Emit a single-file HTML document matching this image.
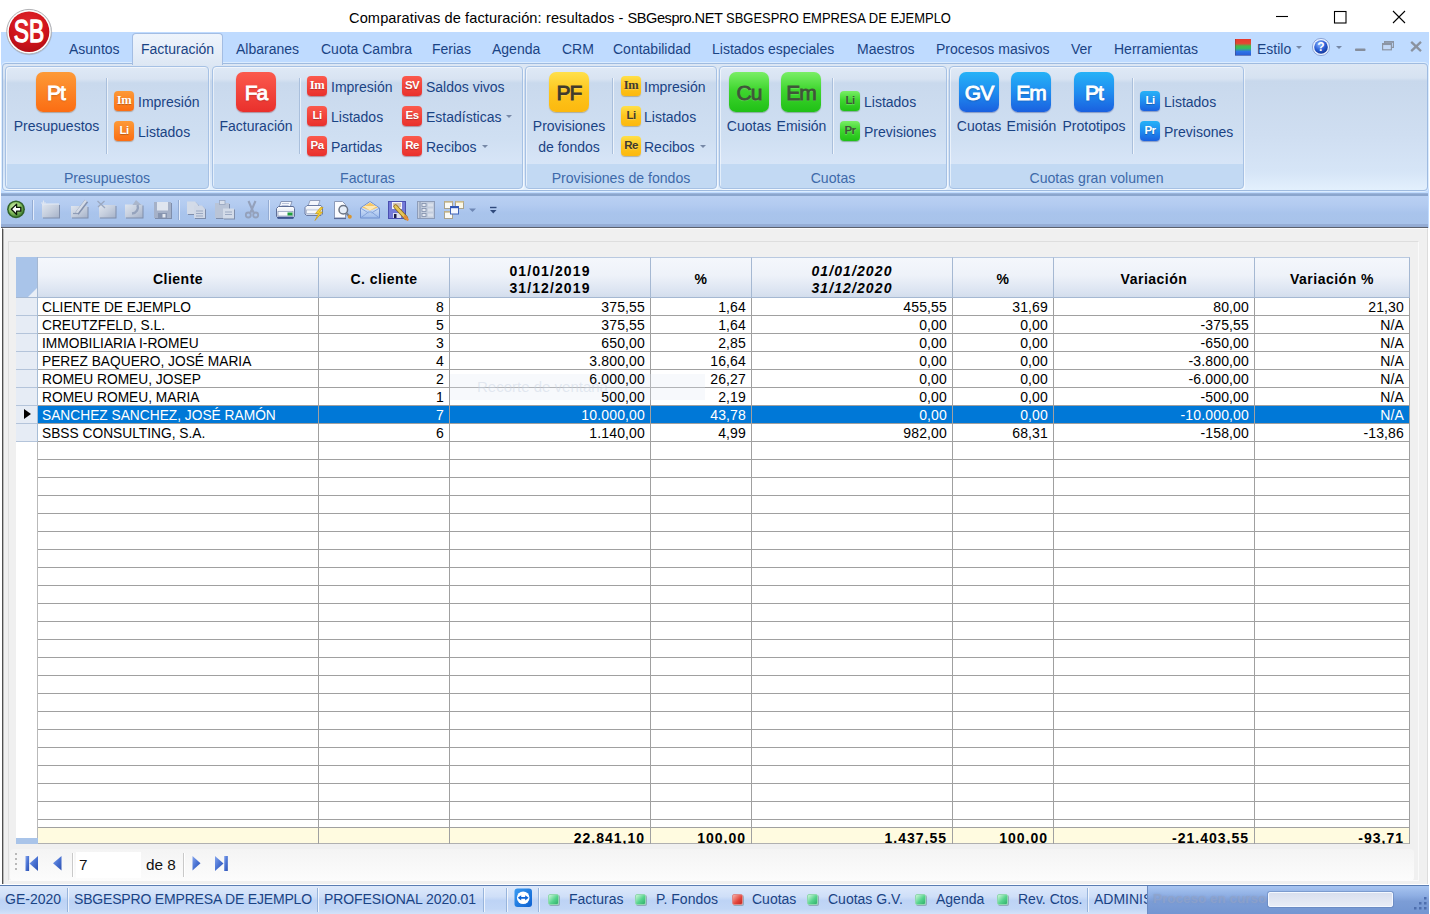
<!DOCTYPE html><html lang="es"><head><meta charset="utf-8"><title>Comparativas de facturación: resultados - SBGespro.NET</title><style>
*{box-sizing:border-box;margin:0;padding:0}
html,body{width:1430px;height:914px;overflow:hidden;background:#fff}
body{position:relative;font-family:"Liberation Sans",sans-serif;font-size:14px;color:#000}
.abs{position:absolute}
.t{position:absolute;white-space:nowrap;line-height:1}
/* title */
#title{left:349px;top:11px;font-size:14.6px;color:#000;letter-spacing:0}
#t1{letter-spacing:.105px}#t2{letter-spacing:-.485px}#t3{display:inline-block;transform:scaleX(.889);transform-origin:0 50%}
/* tab row */
#tabrow{left:1px;top:32px;width:1428px;height:196px;background:#bfdbff}
.tab{position:absolute;top:42px;font-size:14px;color:#1a4384;white-space:nowrap;line-height:1}
#acttab{left:132px;top:33px;width:91px;height:32px;border:1px solid #a3bde3;border-bottom:none;border-radius:4px 4px 0 0;background:linear-gradient(#eef4fc,#e5edf8 60%,#dde7f4)}
/* ribbon */
#ribbon{left:2px;top:63px;width:1426px;height:128px;border:1px solid #9fbbe0;border-radius:4px;box-shadow:0 0 0 1px rgba(226,240,255,.8);background:linear-gradient(#dde7f4 0,#d6e2f1 14px,#c8d8ec 17px,#cfdef1 70px,#d6e5f7 108px,#e3f0fd 126px)}
.grp{position:absolute;top:66px;height:123px;border:1px solid #a6c1e4;border-radius:4px;background:linear-gradient(#dfe9f6 0,#d8e3f2 12px,#c9d9ed 16px,#cfdff2 71px,#d7e5f7 97px,#c2d9f3 97px,#c2d9f3 100%);box-shadow:inset 1px 1px 0 rgba(255,255,255,.55), 1px 1px 0 rgba(255,255,255,.6)}
.gcap{position:absolute;left:0;right:0;bottom:0;height:23px;text-align:center;font-size:14.1px;line-height:27px;color:#3e6aaa;white-space:nowrap}
.big{position:absolute;top:72px;width:40px;height:40px;border-radius:7px;color:#fff;font-weight:normal;-webkit-text-stroke:.9px;font-size:21px;text-align:center;line-height:41px;letter-spacing:-1px;text-shadow:0 1px 2px rgba(0,0,0,.28)}
.sm{position:absolute;width:20px;height:20px;border-radius:4px;color:#fff;font-weight:bold;font-size:11.5px;text-align:center;line-height:19px;letter-spacing:-0.6px;margin-top:-1px;text-shadow:0 1px 1px rgba(0,0,0,.25)}
.sm{-webkit-text-stroke:0 !important}
.sf{font-family:"Liberation Serif",serif;font-size:12.5px !important;letter-spacing:-.3px !important}
.or{background:linear-gradient(#fd9a37,#fb6d13);box-shadow:0 1px 1px rgba(120,60,0,.35)}
.rd{background:linear-gradient(#fb5a4d,#e9302c);box-shadow:0 1px 1px rgba(120,0,0,.35)}
.ye{background:linear-gradient(#ffe04a,#fdc51c 50%,#fcb80e);box-shadow:0 1px 1px rgba(120,90,0,.35);color:#40392c !important;-webkit-text-stroke:.85px;text-shadow:0 1px 1px rgba(255,255,255,.25) !important}
.gr{background:linear-gradient(#7aee66,#3fd62f 45%,#20c016);box-shadow:0 1px 1px rgba(0,90,0,.35);color:#3f5539 !important;-webkit-text-stroke:.85px;text-shadow:0 1px 1px rgba(255,255,255,.25) !important}
.bl{background:linear-gradient(#25b2f7,#1f8df0 50%,#1a60df);box-shadow:0 1px 1px rgba(0,30,120,.35)}
.rl{position:absolute;font-size:14px;color:#1a4384;white-space:nowrap;line-height:1}
.rlc{position:absolute;font-size:14px;color:#1a4384;white-space:nowrap;line-height:1;text-align:center;transform:translateX(-50%)}
.vsep{position:absolute;top:78px;width:1px;height:76px;background:#a9bfdc;box-shadow:1px 0 0 rgba(255,255,255,.6)}
.dd{position:absolute;width:0;height:0;border:3px solid transparent;border-top:3px solid #7688a6;border-bottom:none}
/* toolbar */
#toolbar{left:1px;top:193px;width:1427px;height:35px;background:linear-gradient(#a9c1e4 0,#8ba6ce 1px,#8aa5cd 2.5px,#b9d0f3 3.5px,#b3cbf0 12px,#a9c4ec 20px,#a8c3ea 30.5px,#96aed6 31.5px,#93abd3 33.5px,#5b606c 34px,#5b606c 35px)}
/* panel */
#panel{left:2px;top:228px;width:1426px;height:656px;background:#f0f0f0;border-left:1px solid #505050;box-shadow:inset 1px 0 0 #b8b8b8;border-top:1px solid #fbfbfb;border-right:1px solid #dcdcdc}
#inner{left:8px;top:241px;width:1411px;height:640px;border:1px solid #dedede;border-right-color:#fafafa;border-bottom-color:#fafafa;background:#f0f0f0}
/* grid */
#grid{left:16px;top:257px;width:1394px;height:587px;background:#fff;overflow:hidden}
.hc{position:absolute;top:0;height:41px;border-right:1px solid #a5b8d2;border-bottom:1px solid #a5b8d2;border-top:1px solid #b9c9e0;background:linear-gradient(#f4f7fc 0,#eef2f9 45%,#d9e2f0 90%,#d3ddec 100%);font-weight:bold;font-size:14px;letter-spacing:.5px;padding-top:4px;display:flex;align-items:center;justify-content:center;text-align:center;line-height:17px}
.dt{letter-spacing:1.1px}
.vl{position:absolute;top:41px;width:1px;height:546px;background:#a0a0a0}
.hl{position:absolute;left:22px;width:1372px;height:1px;background:#a0a0a0}
.c{position:absolute;font-size:14px;line-height:17px;height:17px;white-space:nowrap;overflow:hidden}
.r{text-align:right;padding-right:5px;letter-spacing:.15px}
.l{padding-left:4px;font-size:13.75px}
.selrow{position:absolute;left:22px;width:1372px;height:18px;background:#0078d7}
.sel{color:#fff}
.ft{font-weight:bold;letter-spacing:1px}
/* status */
#status{left:0;top:885px;width:1429px;height:29px;background:linear-gradient(#dde9fb 0,#cfdff8 38%,#bdd3f5 52%,#c2d7f6 82%,#d3e2f9 100%);border-top:1px solid #5a7db3}
.st{position:absolute;top:892px;font-size:14px;color:#1a4384;white-space:nowrap;line-height:1}
.ssep{position:absolute;top:888px;width:1px;height:24px;background:#97b4dc;box-shadow:1px 0 0 rgba(255,255,255,.7)}
.led{position:absolute;top:894px;width:11px;height:11px;border-radius:2px;box-shadow:1px 1px 0 rgba(60,90,80,.35)}
.lg{background:linear-gradient(135deg,#cdf6da,#56d48e 55%,#32b06c);border:1px solid #8fd8ae}
.lr{background:linear-gradient(135deg,#f7b0a8,#e2433a 60%,#c02b25);border:1px solid #d88}
</style></head><body>
<div id="title" class="t"><span id="t1">Comparativas de facturación: resultados - </span><span id="t2">SBGespro.NET </span><span id="t3">SBGESPRO EMPRESA DE EJEMPLO</span></div>
<svg class="abs" style="left:1270px;top:5px" width="150" height="24" viewBox="0 0 150 24"><g stroke="#000" stroke-width="1.1" fill="none"><path d="M6 11.5H18"/><rect x="64.5" y="6.5" width="11.5" height="11.5"/><path d="M123 6L135 18M135 6L123 18"/></g></svg>
<div id="tabrow" class="abs"></div>
<div id="ribbon" class="abs"></div>
<div id="acttab" class="abs"></div>
<div class="tab" style="left:69px">Asuntos</div>
<div class="tab" style="left:141px">Facturación</div>
<div class="tab" style="left:236px">Albaranes</div>
<div class="tab" style="left:321px">Cuota Cambra</div>
<div class="tab" style="left:432px">Ferias</div>
<div class="tab" style="left:492px">Agenda</div>
<div class="tab" style="left:562px">CRM</div>
<div class="tab" style="left:613px">Contabilidad</div>
<div class="tab" style="left:712px">Listados especiales</div>
<div class="tab" style="left:857px">Maestros</div>
<div class="tab" style="left:936px">Procesos masivos</div>
<div class="tab" style="left:1071px">Ver</div>
<div class="tab" style="left:1114px">Herramientas</div>
<div class="abs" style="left:1235px;top:39px;width:16px;height:16px;background:linear-gradient(#e8382c 0,#e04a33 28%,#3fbf4a 45%,#35b86a 60%,#2f74e6 78%,#2a5fd8 100%);box-shadow:inset 1px 0 0 rgba(90,50,50,.35),0 1px 0 rgba(30,50,140,.55)"></div>
<div class="tab" style="left:1257px">Estilo</div>
<div class="dd" style="left:1296px;top:46px"></div>
<svg class="abs" style="left:1311px;top:37px" width="20" height="20" viewBox="0 0 20 20"><defs><radialGradient id="hg" cx="40%" cy="30%" r="70%"><stop offset="0" stop-color="#8fb6ff"/><stop offset=".6" stop-color="#2c5fd6"/><stop offset="1" stop-color="#173a9c"/></radialGradient></defs><circle cx="10" cy="10" r="8.6" fill="#e8f0ff" stroke="#8ea6d8" stroke-width="1"/><circle cx="10" cy="10" r="6.8" fill="url(#hg)"/><text x="10" y="14.3" font-family="Liberation Sans,sans-serif" font-weight="bold" font-size="12" fill="#fff" text-anchor="middle">?</text></svg>
<div class="dd" style="left:1336px;top:46px"></div>
<svg class="abs" style="left:1350px;top:38px" width="76" height="16" viewBox="0 0 76 16"><rect x="5" y="10.600" width="10.500" height="2.400" rx=".8" fill="#868e9c"/><g fill="none" stroke="#8c95a4" stroke-width="1.200"><path d="M34.600 5.500v-1.900h8.800v5.800h-1.900"/><path d="M34.600 3.900h8.800" stroke-width="1.800"/><rect x="32.600" y="5.600" width="8.800" height="6.200" fill="#c3d9f8"/><path d="M32.600 6.100h8.800" stroke-width="1.900"/></g><path d="M61.200 3.800l9.800 9.400M71 3.800l-9.800 9.400" stroke="#8a929f" stroke-width="2.300" fill="none"/></svg>
<svg class="abs" style="left:4px;top:7px" width="52" height="52" viewBox="0 0 52 52"><defs><radialGradient id="sbg" cx="50%" cy="30%" r="80%"><stop offset="0" stop-color="#e0282e"/><stop offset=".55" stop-color="#d0141b"/><stop offset="1" stop-color="#a90c12"/></radialGradient></defs><circle cx="25.300" cy="25.300" r="22.900" fill="rgba(130,140,160,.30)"/><circle cx="25.050" cy="24.700" r="22.300" fill="#fdfdfd" stroke="#a9a9ad" stroke-width=".9"/><circle cx="25.050" cy="24.700" r="20.300" fill="url(#sbg)"/><text x="24.900" y="34.600" font-family="Liberation Sans,sans-serif" font-weight="normal" font-size="30.5" fill="#fff" stroke="#fff" stroke-width="1.300" stroke-linejoin="round" text-anchor="middle" textLength="30.300" lengthAdjust="spacingAndGlyphs">SB</text></svg>
<div class="grp" style="left:5px;width:204px"><div class="gcap">Presupuestos</div></div>
<div class="grp" style="left:212px;width:311px"><div class="gcap">Facturas</div></div>
<div class="grp" style="left:525px;width:192px"><div class="gcap">Provisiones de fondos</div></div>
<div class="grp" style="left:719px;width:228px"><div class="gcap">Cuotas</div></div>
<div class="grp" style="left:949px;width:295px"><div class="gcap">Cuotas gran volumen</div></div>
<div class="big or" style="left:36px">Pt</div>
<div class="rlc" style="left:56.5px;top:119px">Presupuestos</div>
<div class="vsep" style="left:106px"></div>
<div class="sm or sf" style="left:114px;top:92px">Im</div>
<div class="rl" style="left:138px;top:95px">Impresión</div>
<div class="sm or" style="left:114px;top:122px">Li</div>
<div class="rl" style="left:138px;top:125px">Listados</div>
<div class="big rd" style="left:236px">Fa</div>
<div class="rlc" style="left:256px;top:119px">Facturación</div>
<div class="vsep" style="left:299px"></div>
<div class="sm rd sf" style="left:307px;top:77px">Im</div>
<div class="rl" style="left:331px;top:80px">Impresión</div>
<div class="sm rd" style="left:307px;top:107px">Li</div>
<div class="rl" style="left:331px;top:110px">Listados</div>
<div class="sm rd" style="left:307px;top:137px">Pa</div>
<div class="rl" style="left:331px;top:140px">Partidas</div>
<div class="sm rd" style="left:402px;top:77px">SV</div>
<div class="rl" style="left:426px;top:80px">Saldos vivos</div>
<div class="sm rd" style="left:402px;top:107px">Es</div>
<div class="rl" style="left:426px;top:110px">Estadísticas</div>
<div class="sm rd" style="left:402px;top:137px">Re</div>
<div class="rl" style="left:426px;top:140px">Recibos</div>
<div class="dd" style="left:506px;top:115px"></div>
<div class="dd" style="left:482px;top:145px"></div>
<div class="big ye" style="left:549px">PF</div>
<div class="rlc" style="left:569px;top:119px">Provisiones</div>
<div class="rlc" style="left:569px;top:140px">de fondos</div>
<div class="vsep" style="left:612px"></div>
<div class="sm ye sf" style="left:621px;top:77px">Im</div>
<div class="rl" style="left:644px;top:80px">Impresión</div>
<div class="sm ye" style="left:621px;top:107px">Li</div>
<div class="rl" style="left:644px;top:110px">Listados</div>
<div class="sm ye" style="left:621px;top:137px">Re</div>
<div class="rl" style="left:644px;top:140px">Recibos</div>
<div class="dd" style="left:700px;top:145px"></div>
<div class="big gr" style="left:729px">Cu</div>
<div class="rlc" style="left:749px;top:119px">Cuotas</div>
<div class="big gr" style="left:781px">Em</div>
<div class="rlc" style="left:801.5px;top:119px">Emisión</div>
<div class="vsep" style="left:832px"></div>
<div class="sm gr" style="left:840px;top:92px">Li</div>
<div class="rl" style="left:864px;top:95px">Listados</div>
<div class="sm gr" style="left:840px;top:122px">Pr</div>
<div class="rl" style="left:864px;top:125px">Previsiones</div>
<div class="big bl" style="left:959px">GV</div>
<div class="rlc" style="left:979px;top:119px">Cuotas</div>
<div class="big bl" style="left:1011px">Em</div>
<div class="rlc" style="left:1031.5px;top:119px">Emisión</div>
<div class="big bl" style="left:1074px">Pt</div>
<div class="rlc" style="left:1094px;top:119px">Prototipos</div>
<div class="vsep" style="left:1132px"></div>
<div class="sm bl" style="left:1140px;top:92px">Li</div>
<div class="rl" style="left:1164px;top:95px">Listados</div>
<div class="sm bl" style="left:1140px;top:122px">Pr</div>
<div class="rl" style="left:1164px;top:125px">Previsones</div>
<div id="toolbar" class="abs"></div>
<svg class="abs" style="left:0;top:195px" width="520" height="32" viewBox="0 195 520 32">
<defs>
<radialGradient id="bkg" cx="40%" cy="35%" r="70%"><stop offset="0" stop-color="#d6efb4"/><stop offset=".55" stop-color="#8cc565"/><stop offset="1" stop-color="#3c7a30"/></radialGradient>
<linearGradient id="dg" x1="0" y1="0" x2="1" y2="1"><stop offset="0" stop-color="#dfe5ee"/><stop offset=".5" stop-color="#c6cfde"/><stop offset="1" stop-color="#a7b3c9"/></linearGradient>
<linearGradient id="env" x1="0" y1="0" x2="0" y2="1"><stop offset="0" stop-color="#f4f8ff"/><stop offset="1" stop-color="#9dbcec"/></linearGradient>
<linearGradient id="pr1" x1="0" y1="0" x2="0" y2="1"><stop offset="0" stop-color="#ffffff"/><stop offset="1" stop-color="#c9d3e6"/></linearGradient>
</defs>
<!-- back -->
<circle cx="16" cy="209.300" r="8.900" fill="#2f6228"/><circle cx="16" cy="209.300" r="7.400" fill="url(#bkg)"/>
<path d="M11.300 209.300l5.300-5.200v3.300h4.200v3.800h-4.200v3.300z" fill="#fff" stroke="#0c1a09" stroke-width="1.300" stroke-linejoin="round"/>
<!-- separators -->
<g><rect x="32" y="200" width="1" height="20" fill="#93abd2"/><rect x="33" y="200" width="1" height="20" fill="#e3ecfb"/>
<rect x="178" y="200" width="1" height="20" fill="#93abd2"/><rect x="179" y="200" width="1" height="20" fill="#e3ecfb"/>
<rect x="268" y="200" width="1" height="20" fill="#93abd2"/><rect x="269" y="200" width="1" height="20" fill="#e3ecfb"/></g>
<!-- disabled icons -->
<g>
 <!-- new -->
 <rect x="43" y="205" width="17" height="13.500" fill="#7f8eab"/><rect x="42" y="204" width="17" height="13.500" fill="url(#dg)"/><path d="M42 204h17" stroke="#e6ecf5" stroke-width="1"/><path d="M43.500 200.500v5M41 203h5" stroke="#dfe6f1" stroke-width="1.200"/>
 <!-- edit -->
 <rect x="72" y="207" width="16.500" height="11.500" fill="#7f8eab"/><rect x="71" y="206" width="16.500" height="11.500" fill="url(#dg)"/><path d="M77 213.500l9.500-12.500" stroke="#8492ae" stroke-width="4.200"/><path d="M76.500 213l9.500-12.500" stroke="#d5dce8" stroke-width="2.400"/><path d="M73 213.500h5" stroke="#8f9db8" stroke-width="1.200"/>
 <!-- delete -->
 <rect x="100" y="206" width="16.500" height="12.500" fill="#7f8eab"/><rect x="99" y="205" width="16.500" height="12.500" fill="url(#dg)"/><path d="M97.500 201l7.500 7M104.500 201l-6.500 6" stroke="#9aa8c1" stroke-width="1.300"/>
 <!-- undo -->
 <rect x="126" y="205.500" width="17.500" height="13" fill="#7f8eab"/><rect x="125" y="204.500" width="17.500" height="13" fill="url(#dg)"/><path d="M136 200l5.500 5h-9z" fill="#aab6cb"/><path d="M137.500 205c1.500 4-1 8-5.500 8.500" stroke="#95a3bd" stroke-width="2.400" fill="none"/>
 <!-- save -->
 <rect x="155" y="203" width="17" height="16" fill="#7f8eab"/><rect x="154" y="202" width="17" height="16" fill="#a5b1c8"/><rect x="157" y="202" width="11" height="8.500" fill="#dfe5ef"/><rect x="158" y="213" width="9" height="5" fill="#8795b0"/><rect x="162.500" y="214" width="3" height="3.500" fill="#e3e8f0"/>
 <!-- copy -->
 <path d="M187 201.500h8l3 3v9.500h-11z" fill="#7f8eab" transform="translate(1,1)"/><path d="M187 201.500h8l3 3v9.500h-11z" fill="#d3dbe8"/><path d="M194 205.500h8l3 3v9.500h-11z" fill="#7f8eab" transform="translate(1,1)"/><path d="M194 205.500h8l3 3v9.500h-11z" fill="#d0d8e6"/><path d="M196 211h7M196 213.500h7M196 216h7" stroke="#9ba9c2" stroke-width="1"/>
 <!-- paste -->
 <rect x="216" y="204" width="14" height="15" fill="#7f8eab"/><rect x="215" y="203" width="14" height="15" fill="#b9c4d7"/><rect x="219.500" y="200.500" width="5.500" height="4" fill="#d8dfeb" stroke="#97a5bf" stroke-width=".8"/><rect x="224" y="209.500" width="11" height="10" fill="#7f8eab"/><rect x="223" y="208.500" width="11" height="10" fill="#d3dbe8"/><path d="M225 212h7M225 214.500h7" stroke="#9ba9c2" stroke-width="1"/>
 <!-- cut -->
 <path d="M248.500 201l5 11.500M255.500 201l-5 11.500" stroke="#94a1bb" stroke-width="2.100"/><circle cx="248.300" cy="215" r="2.500" fill="none" stroke="#94a1bb" stroke-width="1.800"/><circle cx="255.700" cy="215" r="2.500" fill="none" stroke="#94a1bb" stroke-width="1.800"/>
</g>
<!-- printer -->
<g>
 <path d="M281 201.500h11l-2 6h-11z" fill="#f3f6fc" stroke="#7f8fb0" stroke-width=".9"/><path d="M282 203.500h7M281.500 205.500h7" stroke="#aab6d0" stroke-width=".8"/>
 <path d="M276.500 208.500l2-2h15l1 2v8l-1.500 1.500h-15l-1.500-1.500z" fill="url(#pr1)" stroke="#5e6f98" stroke-width="1"/>
 <rect x="278" y="211.500" width="15" height="4.500" fill="#f8fafd" stroke="#8c9ab8" stroke-width=".7"/><rect x="287.500" y="212.500" width="5" height="3" fill="#1f9e3c"/>
 <path d="M277.500 217.800h16" stroke="#3d5590" stroke-width="2"/>
</g>
<!-- quick print -->
<g>
 <path d="M310 200.500h10l-2 5.500h-10z" fill="#f3f6fc" stroke="#8c9ab8" stroke-width=".9"/>
 <path d="M305 207.500l2-2h14l1.500 2v6.500l-1.500 1.500h-14.500l-1.500-1.500z" fill="url(#pr1)" stroke="#6a7ba3" stroke-width="1"/>
 <rect x="306.500" y="210" width="12" height="3.500" fill="#f8fafd" stroke="#9aa7c2" stroke-width=".6"/>
 <path d="M320.500 207.500l-5 6h3l-3.500 7 7.500-8.500h-3l3.500-4.500z" fill="#f6d235" stroke="#c79a18" stroke-width=".7"/>
</g>
<!-- preview -->
<g>
 <path d="M334.500 201.500h8l3 3v13.500h-11z" fill="#fbfcff" stroke="#8c9ab8" stroke-width="1"/><path d="M334 218.500h12" stroke="#5a6c98" stroke-width="1.200"/>
 <circle cx="343.300" cy="209.800" r="4.300" fill="#e6eef9" stroke="#6b7484" stroke-width="1.500"/>
 <path d="M346.500 213.200l2.500 2.800" stroke="#7a8290" stroke-width="2.200"/><circle cx="349.800" cy="216.800" r="2" fill="#d9952f"/>
</g>
<!-- envelope -->
<g>
 <path d="M360.500 208l9.500-6.500 9.500 6.500v10h-19z" fill="url(#env)" stroke="#6f8fce" stroke-width="1"/>
 <path d="M362 207.500l8-5 8 5-8 3z" fill="#f7c765"/><path d="M363 206h14l-7 4.500z" fill="#fde9b8"/>
 <path d="M360.500 218l8-6h3l8 6M360.500 208l8 5M379.500 208l-8 5" stroke="#7f9fd8" stroke-width=".9" fill="none"/>
</g>
<!-- save as (floppy + pencil) -->
<g>
 <rect x="388.500" y="201.500" width="17" height="17" fill="#747ad8" stroke="#4a4fb0" stroke-width="1"/>
 <rect x="392" y="202" width="10" height="7" fill="#f4f5fb"/><path d="M393 204h8M393 206h8" stroke="#9a6a3a" stroke-width=".7"/>
 <rect x="393" y="213" width="8" height="5" fill="#dcdff2"/><rect x="394" y="214" width="2.500" height="4" fill="#1d1f4a"/>
 <path d="M395.500 206.500l10.500 11.500" stroke="#8a6a1c" stroke-width="4.200" stroke-linecap="round"/><path d="M395.500 206.500l10.500 11.500" stroke="#e5c558" stroke-width="2.600" stroke-linecap="round"/><path d="M405 216.500l2.500 3" stroke="#e58a3a" stroke-width="2.600" stroke-linecap="round"/>
</g>
<!-- list (disabled) -->
<g>
 <rect x="417.500" y="201.500" width="17" height="17" fill="#c3cddd" stroke="#8d9cb8" stroke-width="1"/>
 <path d="M420 201.500v17" stroke="#8d9cb8" stroke-width="1.200"/>
 <rect x="422" y="203.500" width="4" height="3" fill="#e3e8f1" stroke="#7f8eab" stroke-width=".8"/><rect x="422" y="208.500" width="4" height="3" fill="#e3e8f1" stroke="#7f8eab" stroke-width=".8"/><rect x="422" y="213.500" width="4" height="3" fill="#e3e8f1" stroke="#7f8eab" stroke-width=".8"/>
 <rect x="428" y="203.500" width="5" height="3" fill="#d9e0eb"/><rect x="428" y="208.500" width="5" height="3" fill="#d9e0eb"/><rect x="428" y="213.500" width="5" height="3" fill="#d9e0eb"/>
</g>
<!-- windows -->
<g>
 <rect x="444.500" y="201.500" width="8" height="7" fill="#fbfbf6" stroke="#a9a28c" stroke-width="1"/><path d="M444.500 202h8" stroke="#c9b98c" stroke-width="1.400"/>
 <rect x="455.500" y="201.500" width="8" height="7" fill="#fbf8e8" stroke="#a9a28c" stroke-width="1"/><path d="M455.500 202h8" stroke="#d6c48e" stroke-width="1.400"/>
 <rect x="444.500" y="211.500" width="8" height="7" fill="#fbfbf6" stroke="#a9a28c" stroke-width="1"/><path d="M444.500 212h8" stroke="#c9b98c" stroke-width="1.400"/>
 <rect x="450.500" y="206.500" width="8" height="7.500" fill="#f4f8ff" stroke="#3f63b8" stroke-width="1"/><path d="M450.500 207.300h8" stroke="#2f55b5" stroke-width="1.800"/>
</g>
<path d="M469 208.500h7l-3.500 3.500z" fill="#6f88b5"/>
<path d="M490 207.500h6.500" stroke="#2f4a7c" stroke-width="1.400"/><path d="M490 210h6.500l-3.250 3.500z" fill="#2f4a7c"/>
</svg>

<div id="panel" class="abs"></div><div id="inner" class="abs"></div>
<div id="grid" class="abs">
<div class="abs" style="left:0;top:0;width:22px;height:41px;background:#a9c4e9;border-right:1px solid #a5b8d2;border-bottom:1px solid #a5b8d2"><div class="abs" style="right:0;bottom:0;width:0;height:0;border-left:9px solid transparent;border-bottom:9px solid #e9eef6"></div></div>
<div class="hc" style="left:22px;width:281px"><span>Cliente</span></div>
<div class="hc" style="left:303px;width:131px"><span>C. cliente</span></div>
<div class="hc" style="left:434px;width:201px"><span><span class="dt">01/01/2019<br>31/12/2019</span></span></div>
<div class="hc" style="left:635px;width:101px"><span>%</span></div>
<div class="hc" style="left:736px;width:201px"><span><i class="dt">01/01/2020<br>31/12/2020</i></span></div>
<div class="hc" style="left:937px;width:101px"><span>%</span></div>
<div class="hc" style="left:1038px;width:201px"><span>Variación</span></div>
<div class="hc" style="left:1239px;width:155px"><span>Variación %</span></div>
<div class="abs" style="left:0;top:41px;width:22px;height:144px;background:#e6ecf5;border-right:1px solid #a5b8d2"></div>
<div class="abs" style="left:0;top:58px;width:22px;height:1px;background:#b4c4da"></div>
<div class="abs" style="left:0;top:76px;width:22px;height:1px;background:#b4c4da"></div>
<div class="abs" style="left:0;top:94px;width:22px;height:1px;background:#b4c4da"></div>
<div class="abs" style="left:0;top:112px;width:22px;height:1px;background:#b4c4da"></div>
<div class="abs" style="left:0;top:130px;width:22px;height:1px;background:#b4c4da"></div>
<div class="abs" style="left:0;top:148px;width:22px;height:1px;background:#b4c4da"></div>
<div class="abs" style="left:0;top:166px;width:22px;height:1px;background:#b4c4da"></div>
<div class="abs" style="left:0;top:184px;width:22px;height:1px;background:#b4c4da"></div>
<div class="selrow" style="top:149px"></div>
<div class="hl" style="top:58px"></div>
<div class="hl" style="top:76px"></div>
<div class="hl" style="top:94px"></div>
<div class="hl" style="top:112px"></div>
<div class="hl" style="top:130px"></div>
<div class="hl" style="top:148px"></div>
<div class="hl" style="top:166px"></div>
<div class="hl" style="top:184px"></div>
<div class="hl" style="top:202px"></div>
<div class="hl" style="top:220px"></div>
<div class="hl" style="top:238px"></div>
<div class="hl" style="top:256px"></div>
<div class="hl" style="top:274px"></div>
<div class="hl" style="top:292px"></div>
<div class="hl" style="top:310px"></div>
<div class="hl" style="top:328px"></div>
<div class="hl" style="top:346px"></div>
<div class="hl" style="top:364px"></div>
<div class="hl" style="top:382px"></div>
<div class="hl" style="top:400px"></div>
<div class="hl" style="top:418px"></div>
<div class="hl" style="top:436px"></div>
<div class="hl" style="top:454px"></div>
<div class="hl" style="top:472px"></div>
<div class="hl" style="top:490px"></div>
<div class="hl" style="top:508px"></div>
<div class="hl" style="top:526px"></div>
<div class="hl" style="top:544px"></div>
<div class="hl" style="top:562px"></div>
<div class="abs" style="left:22px;top:570px;width:1372px;height:17px;background:#fffbe0;border-top:1px solid #a0a0a0;border-bottom:1px solid #b0b0b0"></div>
<div class="abs" style="left:0;top:581px;width:22px;height:6px;background:#a9c4e9"></div>
<div class="vl" style="left:302px"></div>
<div class="vl" style="left:433px"></div>
<div class="vl" style="left:634px"></div>
<div class="vl" style="left:735px"></div>
<div class="vl" style="left:936px"></div>
<div class="vl" style="left:1037px"></div>
<div class="vl" style="left:1238px"></div>
<div class="vl" style="left:1393px"></div>
<div class="vl" style="left:21px;background:#a7bdd6;height:144px"></div><div class="vl" style="left:21px;top:185px;height:396px;background:#b9b9b9"></div>
<div class="abs" style="left:434px;top:117px;width:255px;height:26px;background:rgba(228,235,246,.28)"></div><div class="t" style="left:461px;top:122px;font-size:15px;color:rgba(200,210,225,.45)">Recorte de ventana</div>
<div class="c l" style="left:22px;top:42px;width:280px">CLIENTE DE EJEMPLO</div>
<div class="c r" style="left:303px;top:42px;width:130px">8</div>
<div class="c r" style="left:434px;top:42px;width:200px">375,55</div>
<div class="c r" style="left:635px;top:42px;width:100px">1,64</div>
<div class="c r" style="left:736px;top:42px;width:200px">455,55</div>
<div class="c r" style="left:937px;top:42px;width:100px">31,69</div>
<div class="c r" style="left:1038px;top:42px;width:200px">80,00</div>
<div class="c r" style="left:1239px;top:42px;width:154px">21,30</div>
<div class="c l" style="left:22px;top:60px;width:280px">CREUTZFELD, S.L.</div>
<div class="c r" style="left:303px;top:60px;width:130px">5</div>
<div class="c r" style="left:434px;top:60px;width:200px">375,55</div>
<div class="c r" style="left:635px;top:60px;width:100px">1,64</div>
<div class="c r" style="left:736px;top:60px;width:200px">0,00</div>
<div class="c r" style="left:937px;top:60px;width:100px">0,00</div>
<div class="c r" style="left:1038px;top:60px;width:200px">-375,55</div>
<div class="c r" style="left:1239px;top:60px;width:154px">N/A</div>
<div class="c l" style="left:22px;top:78px;width:280px">IMMOBILIARIA I-ROMEU</div>
<div class="c r" style="left:303px;top:78px;width:130px">3</div>
<div class="c r" style="left:434px;top:78px;width:200px">650,00</div>
<div class="c r" style="left:635px;top:78px;width:100px">2,85</div>
<div class="c r" style="left:736px;top:78px;width:200px">0,00</div>
<div class="c r" style="left:937px;top:78px;width:100px">0,00</div>
<div class="c r" style="left:1038px;top:78px;width:200px">-650,00</div>
<div class="c r" style="left:1239px;top:78px;width:154px">N/A</div>
<div class="c l" style="left:22px;top:96px;width:280px">PEREZ BAQUERO, JOSÉ MARIA</div>
<div class="c r" style="left:303px;top:96px;width:130px">4</div>
<div class="c r" style="left:434px;top:96px;width:200px">3.800,00</div>
<div class="c r" style="left:635px;top:96px;width:100px">16,64</div>
<div class="c r" style="left:736px;top:96px;width:200px">0,00</div>
<div class="c r" style="left:937px;top:96px;width:100px">0,00</div>
<div class="c r" style="left:1038px;top:96px;width:200px">-3.800,00</div>
<div class="c r" style="left:1239px;top:96px;width:154px">N/A</div>
<div class="c l" style="left:22px;top:114px;width:280px">ROMEU ROMEU, JOSEP</div>
<div class="c r" style="left:303px;top:114px;width:130px">2</div>
<div class="c r" style="left:434px;top:114px;width:200px">6.000,00</div>
<div class="c r" style="left:635px;top:114px;width:100px">26,27</div>
<div class="c r" style="left:736px;top:114px;width:200px">0,00</div>
<div class="c r" style="left:937px;top:114px;width:100px">0,00</div>
<div class="c r" style="left:1038px;top:114px;width:200px">-6.000,00</div>
<div class="c r" style="left:1239px;top:114px;width:154px">N/A</div>
<div class="c l" style="left:22px;top:132px;width:280px">ROMEU ROMEU, MARIA</div>
<div class="c r" style="left:303px;top:132px;width:130px">1</div>
<div class="c r" style="left:434px;top:132px;width:200px">500,00</div>
<div class="c r" style="left:635px;top:132px;width:100px">2,19</div>
<div class="c r" style="left:736px;top:132px;width:200px">0,00</div>
<div class="c r" style="left:937px;top:132px;width:100px">0,00</div>
<div class="c r" style="left:1038px;top:132px;width:200px">-500,00</div>
<div class="c r" style="left:1239px;top:132px;width:154px">N/A</div>
<div class="c l sel" style="left:22px;top:150px;width:280px">SANCHEZ SANCHEZ, JOSÉ RAMÓN</div>
<div class="c r sel" style="left:303px;top:150px;width:130px">7</div>
<div class="c r sel" style="left:434px;top:150px;width:200px">10.000,00</div>
<div class="c r sel" style="left:635px;top:150px;width:100px">43,78</div>
<div class="c r sel" style="left:736px;top:150px;width:200px">0,00</div>
<div class="c r sel" style="left:937px;top:150px;width:100px">0,00</div>
<div class="c r sel" style="left:1038px;top:150px;width:200px">-10.000,00</div>
<div class="c r sel" style="left:1239px;top:150px;width:154px">N/A</div>
<div class="c l" style="left:22px;top:168px;width:280px">SBSS CONSULTING, S.A.</div>
<div class="c r" style="left:303px;top:168px;width:130px">6</div>
<div class="c r" style="left:434px;top:168px;width:200px">1.140,00</div>
<div class="c r" style="left:635px;top:168px;width:100px">4,99</div>
<div class="c r" style="left:736px;top:168px;width:200px">982,00</div>
<div class="c r" style="left:937px;top:168px;width:100px">68,31</div>
<div class="c r" style="left:1038px;top:168px;width:200px">-158,00</div>
<div class="c r" style="left:1239px;top:168px;width:154px">-13,86</div>
<div class="c r ft" style="left:434px;top:573px;height:14px;width:200px">22.841,10</div>
<div class="c r ft" style="left:635px;top:573px;height:14px;width:100px">100,00</div>
<div class="c r ft" style="left:736px;top:573px;height:14px;width:200px">1.437,55</div>
<div class="c r ft" style="left:937px;top:573px;height:14px;width:100px">100,00</div>
<div class="c r ft" style="left:1038px;top:573px;height:14px;width:200px">-21.403,55</div>
<div class="c r ft" style="left:1239px;top:573px;height:14px;width:154px">-93,71</div>
<div class="abs" style="left:8px;top:152px;width:0;height:0;border:5.5px solid transparent;border-left:7px solid #000;border-right:none"></div>
</div>
<div class="abs" style="left:10px;top:849px;width:1404px;height:32px;background:linear-gradient(#f4f4f4,#fcfcfc);border-radius:4px"></div>
<svg class="abs" style="left:10px;top:848px" width="230" height="34" viewBox="10 848 230 34">
<defs><linearGradient id="nb" x1="0" y1="0" x2="1" y2="1"><stop offset="0" stop-color="#86a6ee"/><stop offset=".5" stop-color="#4a73d3"/><stop offset="1" stop-color="#2c4fb0"/></linearGradient></defs>
<g fill="#b9b9b9"><rect x="15" y="853" width="2" height="2"/><rect x="15" y="858" width="2" height="2"/><rect x="15" y="863" width="2" height="2"/><rect x="15" y="868" width="2" height="2"/></g>
<rect x="25.500" y="856" width="3.600" height="15" fill="url(#nb)"/><path d="M38 856v15l-8.500-7.500z" fill="url(#nb)"/>
<path d="M61.500 856v14.500l-8.500-7.250z" fill="url(#nb)"/>
<rect x="72" y="853" width="1" height="24" fill="#c9c9c9"/><rect x="73" y="853" width="1" height="24" fill="#fff"/>
<rect x="76" y="852" width="65" height="26" fill="#fff"/>
<rect x="183" y="853" width="1" height="24" fill="#c9c9c9"/><rect x="184" y="853" width="1" height="24" fill="#fff"/>
<path d="M192.500 856v14.500l8-7.250z" fill="url(#nb)"/>
<path d="M215 856v15l8.500-7.500z" fill="url(#nb)"/><rect x="224.200" y="856" width="3.600" height="15" fill="url(#nb)"/>
</svg>
<div class="t" style="left:79px;top:857px;font-size:15.3px;color:#111">7</div>
<div class="t" style="left:146px;top:857px;font-size:15.3px;color:#111">de 8</div>

<div id="status" class="abs"></div>
<div class="abs" style="left:1147px;top:886px;width:282px;height:28px;background:linear-gradient(#a8c5f1 0,#8eaee3 35%,#7c9dd6 55%,#7396d2 100%);border-left:1px solid #6d8cc2"></div>
<div class="st" style="left:5px">GE-2020</div><div class="ssep" style="left:67px"></div>
<div class="st" style="left:74px;letter-spacing:-.18px">SBGESPRO EMPRESA DE EJEMPLO</div><div class="ssep" style="left:317px"></div>
<div class="st" style="left:324px;letter-spacing:-.08px">PROFESIONAL 2020.01</div><div class="ssep" style="left:483px"></div>
<div class="ssep" style="left:506px"></div><div class="ssep" style="left:538px"></div>
<svg class="abs" style="left:514px;top:888px" width="19" height="20" viewBox="0 0 19 20"><defs><linearGradient id="tv" x1="0" y1="0" x2="1" y2="1"><stop offset="0" stop-color="#3a9bf2"/><stop offset="1" stop-color="#0b5fd0"/></linearGradient></defs><rect x=".5" y=".5" width="17.500" height="18.500" rx="3" fill="url(#tv)"/><circle cx="9.200" cy="9.800" r="6.300" fill="#fff"/><path d="M3.800 9.800l3.400-2.600v1.700h4v-1.700l3.400 2.600-3.400 2.600v-1.700h-4v1.700z" fill="#0d64d6"/></svg>
<div class="led lg" style="left:548px"></div><div class="st" style="left:569px">Facturas</div>
<div class="led lg" style="left:635px"></div><div class="st" style="left:656px">P. Fondos</div>
<div class="led lr" style="left:732px"></div><div class="st" style="left:752px">Cuotas</div>
<div class="led lg" style="left:807px"></div><div class="st" style="left:828px">Cuotas G.V.</div>
<div class="led lg" style="left:915px"></div><div class="st" style="left:936px">Agenda</div>
<div class="led lg" style="left:997px"></div><div class="st" style="left:1018px">Rev. Ctos.</div>
<div class="ssep" style="left:1087px"></div>
<div class="st" style="left:1094px;width:53px;overflow:hidden">ADMINIS</div>
<div class="st" style="left:1153px;font-size:13.5px;font-weight:bold;color:rgba(150,166,200,.6);letter-spacing:0;text-shadow:0 0 2px rgba(120,145,195,.6)">Proceso en curso</div>
<div class="abs" style="left:1268px;top:892px;width:125px;height:15px;border:1px solid #f4f8ff;border-radius:2px;background:linear-gradient(#d9dfee,#e9edf6);box-shadow:0 0 0 1px rgba(95,125,180,.5)"></div>
<svg class="abs" style="left:1412px;top:895px" width="18" height="18" viewBox="0 0 18 18"><g fill="#4e6fae"><rect x="12" y="2" width="2.500" height="2.500"/><rect x="7" y="7" width="2.500" height="2.500"/><rect x="12" y="7" width="2.500" height="2.500"/><rect x="2" y="12" width="2.500" height="2.500"/><rect x="7" y="12" width="2.500" height="2.500"/><rect x="12" y="12" width="2.500" height="2.500"/></g></svg>

</body></html>
